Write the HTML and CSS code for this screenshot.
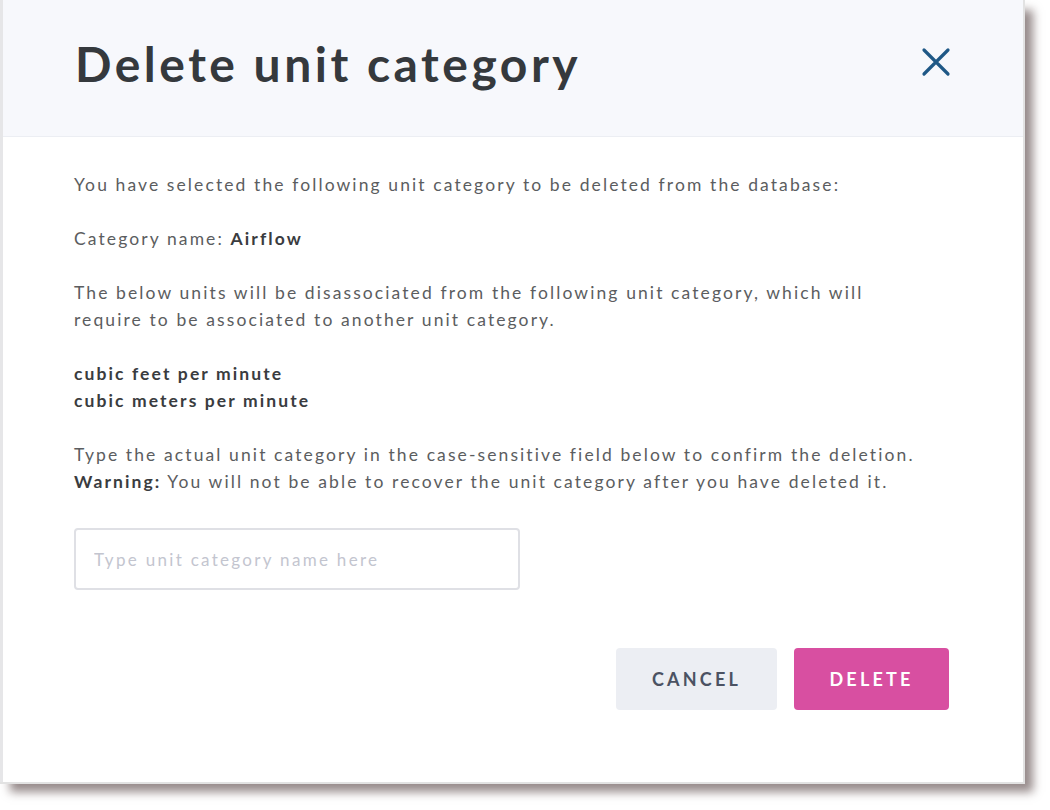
FILE: index.html
```html
<!DOCTYPE html>
<html lang="en">
<head>
<meta charset="utf-8">
<title>Delete unit category</title>
<link rel="stylesheet" href="styles.css">
</head>
<body>
<div class="dialog">
  <header class="dialog-header">
    <h1 class="dialog-title">Delete unit category</h1>
    <button class="close-btn" aria-label="Close">
      <svg width="30" height="30" viewBox="0 0 30 30"><path d="M3 3 L27 27 M27 3 L3 27" stroke="#1f5886" stroke-width="3.2" stroke-linecap="round" fill="none"/></svg>
    </button>
  </header>
  <div class="dialog-body">
    <p>You have selected the following unit category to be deleted from the database:</p>
    <p>Category name: <strong>Airflow</strong></p>
    <p>The below units will be disassociated from the following unit category, which will<br>require to be associated to another unit category.</p>
    <p class="units"><strong>cubic feet per minute</strong><br><strong>cubic meters per minute</strong></p>
    <p>Type the actual unit category in the case-sensitive field below to confirm the deletion.<br><strong>Warning:</strong> You will not be able to recover the unit category after you have deleted it.</p>
    <input class="name-input" type="text" placeholder="Type unit category name here">
    <div class="actions">
      <button class="btn btn-cancel">CANCEL</button>
      <button class="btn btn-delete">DELETE</button>
    </div>
  </div>
</div>
</body>
</html>
```
FILE: styles.css
```css
html, body {
  margin: 0;
  padding: 0;
  background: #ffffff;
}
body {
  font-family: "Lato", "Open Sans", sans-serif;
  width: 1050px;
  height: 810px;
  overflow: hidden;
}
.dialog {
  width: 1023px;
  height: 782px;
  box-sizing: border-box;
  background: #ffffff;
  border-left: 3px solid #e6e6e8;
  box-shadow: 1px 1px 0 1px #e2e2e2, 10px 10px 9px rgba(125, 110, 110, 0.8);
  display: flex;
  flex-direction: column;
}
.dialog-header {
  height: 137px;
  box-sizing: border-box;
  background: #f7f8fc;
  border-bottom: 1px solid #eceef3;
  display: flex;
  align-items: center;
  justify-content: space-between;
  padding: 0 72px 10px 72px;
}
.dialog-title {
  margin: 0;
  font-size: 48px;
  font-weight: 700;
  color: #35393d;
  letter-spacing: 3.5px;
}
.close-btn {
  background: none;
  border: 0;
  padding: 0;
  margin-bottom: 3px;
  width: 30px;
  height: 30px;
  cursor: pointer;
  display: flex;
}
.dialog-body {
  padding: 34px 74px 0 71px;
  display: flex;
  flex-direction: column;
}
.dialog-body p {
  margin: 0 0 27px 0;
  font-size: 17.5px;
  line-height: 27px;
  color: #5b5d60;
  letter-spacing: 2.1px;
}
.dialog-body strong {
  font-weight: 700;
  color: #3a3c40;
}
.name-input {
  margin-top: 6px;
  width: 446px;
  height: 62px;
  box-sizing: border-box;
  border: 2px solid #dfe0e5;
  border-radius: 4px;
  padding: 0 18px;
  font-family: "Lato", "Open Sans", sans-serif;
  font-size: 17px;
  letter-spacing: 2.3px;
  color: #333;
  outline: none;
}
.name-input::placeholder {
  color: #c3c5cf;
}
.actions {
  margin-top: 58px;
  display: flex;
  justify-content: flex-end;
  gap: 17px;
}
.btn {
  height: 62px;
  border: 0;
  border-radius: 4px;
  font-family: "Lato", "Open Sans", sans-serif;
  font-size: 18px;
  font-weight: 700;
  letter-spacing: 3.2px;
  cursor: pointer;
}
.btn-cancel {
  width: 161px;
  background: #eceef3;
  color: #4b5262;
}
.btn-delete {
  width: 155px;
  background: #d84fa1;
  color: #ffffff;
}
```
